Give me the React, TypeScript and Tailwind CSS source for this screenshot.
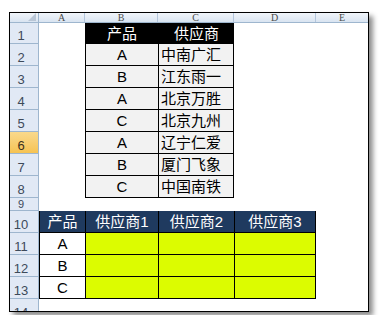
type Kind = 'blank' | 't1h' | 't1b' | 't1c' | 't2h' | 't2a' | 't2y';

type Cell = { kind: Kind; text?: string };

const COLS = ['A', 'B', 'C', 'D', 'E'];
const WIDTHS = ['w-[46px]', 'w-[73px]', 'w-[76px]', 'w-[82px]', 'flex-1'];

const FONT = '[font-family:"Liberation_Sans","Noto_Sans_CJK_SC",sans-serif]';

const t1: [string, string][] = [
  ['A', '中南广汇'],
  ['B', '江东雨一'],
  ['A', '北京万胜'],
  ['C', '北京九州'],
  ['A', '辽宁仁爱'],
  ['B', '厦门飞象'],
  ['C', '中国南铁'],
];

const blank: Cell = { kind: 'blank' };

const rows: { n: number; h: string; cells: Cell[] }[] = [
  {
    n: 1,
    h: 'h-[21px]',
    cells: [blank, { kind: 't1h', text: '产品' }, { kind: 't1h', text: '供应商' }, blank, blank],
  },
  ...t1.map(([p, s], i) => ({
    n: i + 2,
    h: 'h-[22px]',
    cells: [blank, { kind: 't1b' as Kind, text: p }, { kind: 't1c' as Kind, text: s }, blank, blank],
  })),
  { n: 9, h: 'h-[13px]', cells: [blank, blank, blank, blank, blank] },
  {
    n: 10,
    h: 'h-[22px]',
    cells: [
      { kind: 't2h', text: '产品' },
      { kind: 't2h', text: '供应商1' },
      { kind: 't2h', text: '供应商2' },
      { kind: 't2h', text: '供应商3' },
      blank,
    ],
  },
  ...['A', 'B', 'C'].map((p, i) => ({
    n: i + 11,
    h: 'h-[22px]',
    cells: [
      { kind: 't2a' as Kind, text: p },
      { kind: 't2y' as Kind },
      { kind: 't2y' as Kind },
      { kind: 't2y' as Kind },
      blank,
    ],
  })),
  { n: 14, h: 'h-[22px]', cells: [blank, blank, blank, blank, blank] },
];

function cellClass(kind: Kind, col: number) {
  switch (kind) {
    case 't1h':
      return 'bg-black text-white justify-center border-l border-black';
    case 't1b':
      return 'bg-[#f2f2f2] text-black justify-center border-l border-b border-black';
    case 't1c':
      return 'bg-[#f2f2f2] text-black justify-start pl-[2px] border-l border-r border-b border-black';
    case 't2h':
      return `bg-[#1f3a5f] text-white justify-center border-l border-b border-black ${col === 3 ? 'border-r' : ''}`;
    case 't2a':
      return 'bg-white text-black justify-center border-l border-b border-black';
    case 't2y':
      return `bg-[#dcfc00] border-l border-b border-black ${col === 3 ? 'border-r' : ''}`;
    default:
      return 'bg-white';
  }
}

export default function App() {
  return (
    <div className={`w-[381px] h-[315px] bg-white pt-[12px] pl-[9px] overflow-hidden ${FONT}`}>
      <div className="w-[360px] h-[300px] border border-black overflow-hidden shadow-[4px_4px_5px_rgba(0,0,0,0.45)] bg-white">
        {/* column headings */}
        <div className="flex h-[10px] bg-gradient-to-b from-[#f1f5fa] to-[#d9e4f1] border-b border-[#9eb6ce]">
          <div className="w-[29px] relative border-r border-[#9eb6ce]">
            <div className="absolute right-[2px] bottom-[1px] w-0 h-0 border-l-[8px] border-l-transparent border-b-[8px] border-b-[#b9c6d6]" />
          </div>
          {COLS.map((c, i) => (
            <div
              key={c}
              className={`${WIDTHS[i]} ${i < 4 ? 'border-r border-[#b4c6dc]' : ''} flex justify-center`}
            >
              <span className='[font-family:"Liberation_Serif",serif] text-[10px] leading-[9px] text-[#4b4b4b]'>
                {c}
              </span>
            </div>
          ))}
        </div>

        {rows.map((r) => (
          <div key={r.n} className={`flex ${r.h}`}>
            <div
              className={`w-[29px] shrink-0 flex items-end justify-center pr-[6px] border-r border-b border-[#9eb6ce] leading-none ${
                r.n === 9 ? 'text-[11px] pb-0' : 'text-[13px] pb-[1px]'
              } ${
                r.n === 6 ? 'bg-gradient-to-b from-[#f9d98c] to-[#f6c352] text-[#3a3020]' : 'bg-[#e1e9f5] text-[#3d4a5a]'
              }`}
            >
              {r.n}
            </div>
            {r.cells.map((c, i) => (
              <div
                key={i}
                className={`${WIDTHS[i]} shrink-0 flex items-center text-[15px] leading-none ${cellClass(c.kind, i)}`}
              >
                {c.text}
              </div>
            ))}
          </div>
        ))}
      </div>
    </div>
  );
}
